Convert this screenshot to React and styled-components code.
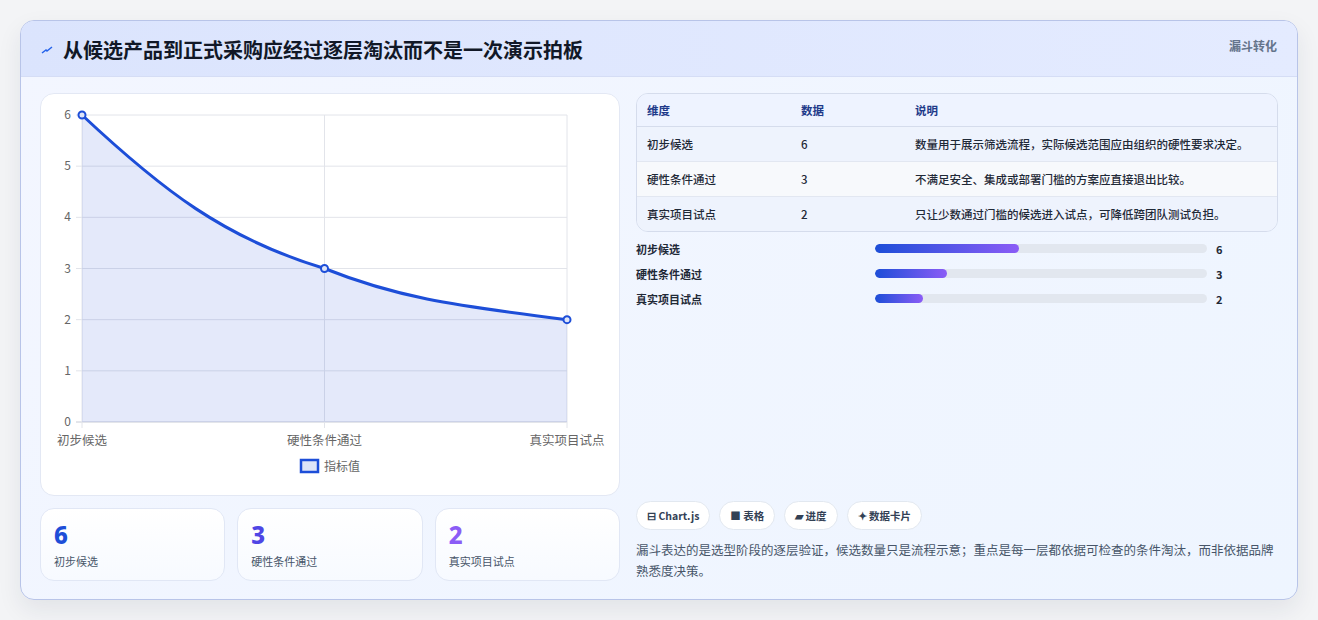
import React from "react";
import styled, { createGlobalStyle } from "styled-components";

const GlobalStyle = createGlobalStyle`
  body { margin: 0; background: #f3f4f6; font-family: "Noto Sans CJK SC", "Noto Sans", sans-serif; }
`;

const stages = [
  { name: "初步候选", value: 6, note: "数量用于展示筛选流程，实际候选范围应由组织的硬性要求决定。", color: "#1d4ed8" },
  { name: "硬性条件通过", value: 3, note: "不满足安全、集成或部署门槛的方案应直接退出比较。", color: "#4f46e5" },
  { name: "真实项目试点", value: 2, note: "只让少数通过门槛的候选进入试点，可降低跨团队测试负担。", color: "#8b5cf6" },
];

const Page = styled.div`
  padding: 20px;
  height: 620px;
  box-sizing: border-box;
`;

const Card = styled.div`
  width: 1278px;
  height: 580px;
  box-sizing: border-box;
  border: 1px solid #b8c4e8;
  border-radius: 14px;
  background: linear-gradient(135deg, #f3f6ff 0%, #eef5ff 100%);
  box-shadow: 0 10px 24px rgba(30, 41, 59, 0.08);
  overflow: hidden;
  display: flex;
  flex-direction: column;
`;

const Header = styled.div`
  height: 55px;
  flex: none;
  background: linear-gradient(90deg, #dbe4fd, #e4ebff);
  border-bottom: 1px solid #d5ddf5;
  display: flex;
  align-items: flex-start;
  justify-content: space-between;
  padding: 0 20px;
`;

const Title = styled.h1`
  margin: 14px 0 0;
  font-size: 20px;
  font-weight: 700;
  color: #111827;
  display: flex;
  align-items: center;
  gap: 10px;
`;

const Tag = styled.span`
  margin-top: 16px;
  font-size: 12px;
  font-weight: 700;
  color: #64748b;
`;

const Body = styled.div`
  flex: 1;
  display: grid;
  grid-template-columns: 580px 642px;
  gap: 16px;
  padding: 16px 19px 18px 19px;
`;

const Left = styled.div`
  display: flex;
  flex-direction: column;
  gap: 12px;
`;

const ChartCard = styled.div`
  height: 403px;
  box-sizing: border-box;
  background: #fff;
  border: 1px solid #e3e8f4;
  border-radius: 14px;
`;

const Stats = styled.div`
  display: grid;
  grid-template-columns: repeat(3, 1fr);
  gap: 12px;
`;

const Stat = styled.div`
  height: 73px;
  box-sizing: border-box;
  border: 1px solid #e1e7f5;
  border-radius: 14px;
  background: linear-gradient(180deg, #ffffff, #f7faff);
  padding: 11px 13px;
`;

const StatNum = styled.div`
  font-family: "Noto Sans", sans-serif;
  font-size: 24px;
  font-weight: 800;
  line-height: 30px;
  color: ${(p) => p.color};
`;

const StatLabel = styled.div`
  font-size: 11px;
  color: #475569;
  margin-top: 3px;
`;

const Right = styled.div`
  display: flex;
  flex-direction: column;
`;

const Table = styled.table`
  width: 100%;
  border-collapse: separate;
  border-spacing: 0;
  border: 1px solid #d5dcec;
  border-radius: 12px;
  overflow: hidden;
  font-size: 11.5px;
  color: #1f2937;
  th {
    text-align: left;
    font-weight: 700;
    color: #1e3a8a;
    height: 32px;
    padding: 0 10px;
    background: #eef3ff;
    border-bottom: 1px solid #d5dcec;
  }
  td {
    height: 34px;
    padding: 0 10px;
    font-weight: 500;
  }
  tr:nth-child(odd) td { background: #eef3fd; }
  tr:nth-child(even) td { background: #f7f9fc; }
  tr:not(:last-child) td { border-bottom: 1px solid #e2e7f1; }
`;

const Bars = styled.div`
  margin-top: 7px;
  display: flex;
  flex-direction: column;
  gap: 6px;
`;

const BarRow = styled.div`
  display: grid;
  grid-template-columns: 239px 332px 1fr;
  align-items: center;
  height: 19px;
  font-size: 11px;
  font-weight: 600;
  color: #1f2937;
`;

const Track = styled.div`
  height: 9px;
  border-radius: 5px;
  background: #e2e7ef;
  overflow: hidden;
`;

const Fill = styled.div`
  height: 100%;
  border-radius: 5px;
  background: linear-gradient(90deg, #1d4ed8, #8b5cf6);
`;

const Val = styled.span`
  padding-left: 9px;
  font-weight: 700;
`;

const Pills = styled.div`
  margin-top: auto;
  display: flex;
  gap: 9px;
`;

const Pill = styled.span`
  height: 29px;
  box-sizing: border-box;
  padding: 0 10px;
  display: inline-flex;
  align-items: center;
  gap: 4px;
  background: #fff;
  border: 1px solid #e2e8f0;
  border-radius: 15px;
  font-size: 10.5px;
  font-weight: 700;
  color: #334155;
`;

const Note = styled.p`
  margin: 9px 0 0;
  font-size: 12.5px;
  line-height: 21px;
  color: #475569;
`;

function Chart() {
  const x0 = 41, x1 = 526, y0 = 21, y1 = 328;
  const xs = [x0, (x0 + x1) / 2, x1];
  const y = (v) => y1 - (v / 6) * (y1 - y0);
  const pts = stages.map((s, i) => [xs[i], y(s.value)]);
  const line = `M${pts[0][0]},${pts[0][1]} C${pts[0][0] + 80},${pts[0][1] + 75} ${pts[1][0] - 100},${pts[1][1] - 30} ${pts[1][0]},${pts[1][1]} C${pts[1][0] + 70},${pts[1][1] + 28} ${pts[2][0] - 120},${pts[2][1] - 15} ${pts[2][0]},${pts[2][1]}`;
  return (
    <svg width="580" height="403" style={{ display: "block" }} fontFamily="Noto Sans CJK SC, sans-serif">
      {[0, 1, 2, 3, 4, 5, 6].map((v) => (
        <g key={v}>
          <line x1={x0 - 6} x2={x1} y1={y(v)} y2={y(v)} stroke={v === 0 ? "#c8cbd6" : "#e2e4ea"} />
          <text x={x0 - 11} y={y(v) + 4} fontSize="12" fill="#666" textAnchor="end">{v}</text>
        </g>
      ))}
      {xs.map((x, i) => (
        <line key={i} x1={x} x2={x} y1={y0} y2={y1 + 6} stroke="#e2e4ea" />
      ))}
      <path d={`${line} L${x1},${y1} L${x0},${y1} Z`} fill="rgba(29,78,216,0.12)" />
      <path d={line} fill="none" stroke="#1d4ed8" strokeWidth="3" />
      {pts.map(([px, py], i) => (
        <circle key={i} cx={px} cy={py} r="3.5" fill="#dfe5f8" stroke="#1d4ed8" strokeWidth="2" />
      ))}
      <text x={x0} y={351} fontSize="12.5" fill="#666" textAnchor="middle">初步候选</text>
      <text x={xs[1]} y={351} fontSize="12.5" fill="#666" textAnchor="middle">硬性条件通过</text>
      <text x={x1} y={351} fontSize="12.5" fill="#666" textAnchor="middle">真实项目试点</text>
      <rect x="260" y="366" width="17" height="12" fill="#dfe5f8" stroke="#1d4ed8" strokeWidth="2.5" />
      <text x="283" y="377" fontSize="12" fill="#666">指标值</text>
    </svg>
  );
}

export default function App() {
  return (
    <>
      <GlobalStyle />
      <Page>
        <Card>
          <Header>
            <Title>
              <svg width="12" height="10" viewBox="0 0 12 10">
                <path d="M1 8 L5 5 L6 6 L11 2" stroke="#2563eb" strokeWidth="1.5" fill="none" />
              </svg>
              从候选产品到正式采购应经过逐层淘汰而不是一次演示拍板
            </Title>
            <Tag>漏斗转化</Tag>
          </Header>
          <Body>
            <Left>
              <ChartCard>
                <Chart />
              </ChartCard>
              <Stats>
                {stages.map((s) => (
                  <Stat key={s.name}>
                    <StatNum color={s.color}>{s.value}</StatNum>
                    <StatLabel>{s.name}</StatLabel>
                  </Stat>
                ))}
              </Stats>
            </Left>
            <Right>
              <Table>
                <thead>
                  <tr>
                    <th style={{ width: 134 }}>维度</th>
                    <th style={{ width: 94 }}>数据</th>
                    <th>说明</th>
                  </tr>
                </thead>
                <tbody>
                  {stages.map((s) => (
                    <tr key={s.name}>
                      <td>{s.name}</td>
                      <td>{s.value}</td>
                      <td>{s.note}</td>
                    </tr>
                  ))}
                </tbody>
              </Table>
              <Bars>
                {stages.map((s) => (
                  <BarRow key={s.name}>
                    <span>{s.name}</span>
                    <Track>
                      <Fill style={{ width: `${(s.value / 6) * 43.5}%` }} />
                    </Track>
                    <Val>{s.value}</Val>
                  </BarRow>
                ))}
              </Bars>
              <Pills>
                <Pill>⊟ Chart.js</Pill>
                <Pill>■ 表格</Pill>
                <Pill>▰ 进度</Pill>
                <Pill>✦ 数据卡片</Pill>
              </Pills>
              <Note>
                漏斗表达的是选型阶段的逐层验证，候选数量只是流程示意；重点是每一层都依据可检查的条件淘汰，而非依据品牌熟悉度决策。
              </Note>
            </Right>
          </Body>
        </Card>
      </Page>
    </>
  );
}
